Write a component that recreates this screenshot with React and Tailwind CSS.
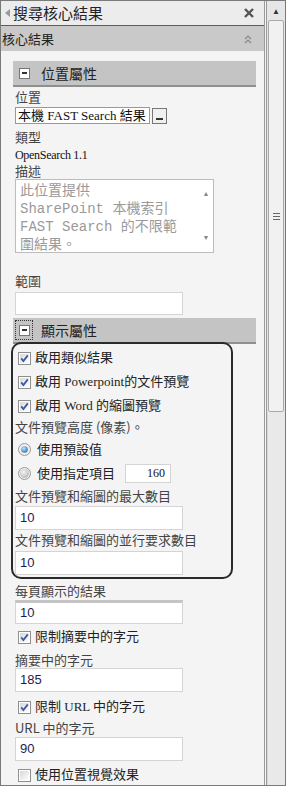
const cjk = "font-['Noto_Sans_CJK_TC','Liberation_Sans',sans-serif]";
const serif = "font-['Liberation_Serif','Noto_Sans_CJK_TC',serif]";

const Check = ({ checked = true }) => (
  <svg width="13" height="13" viewBox="0 0 13 13" className="shrink-0">
    <defs>
      <linearGradient id="cb" x1="0" y1="0" x2="1" y2="1">
        <stop offset="0" stopColor="#d8d8d8" />
        <stop offset="1" stopColor="#ffffff" />
      </linearGradient>
    </defs>
    <rect x="0.5" y="0.5" width="12" height="12" fill="#fff" stroke="#8e8f8f" />
    <rect x="2" y="2" width="9" height="9" fill="url(#cb)" />
    {checked && (
      <path d="M3.2 6.4 L5.4 9 L9.8 3.4" fill="none" stroke="#3a5aa8" strokeWidth="1.8" />
    )}
  </svg>
);

const Radio = ({ checked }) => (
  <svg width="13" height="13" viewBox="0 0 13 13" className="shrink-0">
    <defs>
      <radialGradient id={checked ? "rb1" : "rb0"} cx="0.4" cy="0.35" r="0.7">
        <stop offset="0" stopColor={checked ? "#bfe4fb" : "#f4f4f4"} />
        <stop offset="1" stopColor={checked ? "#2a6fb8" : "#b9b9b9"} />
      </radialGradient>
    </defs>
    <circle cx="6.5" cy="6.5" r="6" fill="#eee" stroke="#9a9a9a" />
    <circle cx="6.5" cy="6.5" r={checked ? 3.3 : 4.5} fill={`url(#${checked ? "rb1" : "rb0"})`} />
  </svg>
);

const CheckRow = ({ label, checked = true, className = "" }) => (
  <div className={`flex items-center gap-[4px] pl-[3px] h-[24px] shrink-0 ${className}`}>
    <Check checked={checked} />
    <span className={`text-[13px] text-[#222] ${serif}`}>{label}</span>
  </div>
);

const Label = ({ children, className = "" }) => (
  <div className={`text-[13px] leading-[16px] text-[#444] shrink-0 ${cjk} ${className}`}>{children}</div>
);

const Field = ({ value, strong = false }) => (
  <div
    className={`w-[168px] h-[24px] bg-white border border-[#d4d4d4] ${strong ? "border-t-[3px] border-t-[#c4c4c4]" : ""} flex items-center pl-[4px] text-[13px] text-[#1c1c55] font-['Liberation_Sans',sans-serif]`}
  >
    {value}
  </div>
);

const SectionHead = ({ title, focus = false }) => (
  <div className="-ml-[2px] w-[243px] h-[26px] shrink-0 bg-[#c4c4c4] border-b-2 border-b-[#8f8f8f] flex items-center">
    <div
      className={`ml-[2px] w-[18px] h-[20px] flex items-center justify-center ${focus ? "border border-dotted border-[#333]" : ""}`}
    >
      <div className="w-[11px] h-[11px] bg-white border border-[#777] flex items-center justify-center">
        <div className="w-[5px] h-[1.5px] bg-[#333]" />
      </div>
    </div>
    <span className={`ml-[8px] text-[14px] text-[#222] ${cjk}`}>{title}</span>
  </div>
);

export default function App() {
  return (
    <div className="w-[286px] h-[786px] flex overflow-hidden border border-[#7a7a7a] bg-[#f4f4f4]">
      <div className="flex-1 flex flex-col border-r-[3px] border-double border-r-[#9a9a9a]">
        <div className="h-[25px] shrink-0 bg-[#ececec] border-b border-b-[#5a5a5a] flex items-center pl-[4px] pr-[10px]">
          <svg width="5" height="8" viewBox="0 0 5 8" className="mr-[3px]">
            <path d="M5 0 L0 4 L5 8 Z" fill="#9a9a9a" />
          </svg>
          <span className={`text-[15px] text-[#222] ${cjk}`}>搜尋核心結果</span>
          <svg width="10" height="10" viewBox="0 0 10 10" className="ml-auto">
            <path d="M1 1 L9 9 M9 1 L1 9" stroke="#555" strokeWidth="2.4" />
          </svg>
        </div>
        <div className="h-[25px] shrink-0 bg-[#c9c9c9] flex items-center pl-[1px] pr-[11px]">
          <span className={`text-[13px] text-[#222] ${cjk}`}>核心結果</span>
          <svg width="10" height="10" viewBox="0 0 10 10" className="ml-auto">
            <path d="M2 5 L5 2 L8 5 M2 9 L5 6 L8 9" fill="none" stroke="#888" strokeWidth="1.2" />
          </svg>
        </div>

        <div className="pl-[14px] pt-[10px] flex flex-col">
          <SectionHead title="位置屬性" />
          <Label className="mt-[2px]">位置</Label>
          <div className="mt-[2px] flex items-center gap-[2px] shrink-0">
            <div className={`w-[135px] h-[17px] bg-white border border-[#999] flex items-center pl-[2px] text-[13px] text-[#111] ${serif}`}>
              本機 FAST Search 結果
            </div>
            <div className="w-[15px] h-[16px] bg-[#f0f0f0] border border-[#777] flex items-end justify-center pb-[3px]">
              <div className="w-[7px] h-[2px] bg-[#333]" />
            </div>
          </div>
          <Label className="mt-[5px]">類型</Label>
          <div className={`mt-[2px] text-[12px] leading-[16px] text-[#111] ${serif} tracking-[-0.3px]`}>OpenSearch 1.1</div>
          <Label className="mt-[0px]">描述</Label>
          <div className="w-[199px] h-[74px] shrink-0 bg-white border border-[#bcbcbc] flex overflow-hidden">
            <div className="flex-1 pl-[4px] pt-[2px] text-[14px] leading-[18px] text-[#9a9a9a] font-['Liberation_Mono','Noto_Sans_CJK_TC',monospace] whitespace-nowrap">
              <div>此位置提供</div>
              <div>SharePoint 本機索引</div>
              <div>FAST Search 的不限範</div>
              <div>圍結果。</div>
            </div>
            <div className="w-[14px] flex flex-col items-center justify-between py-[9px] text-[7px] text-[#888]">
              <span>▲</span>
              <span>▼</span>
            </div>
          </div>
          <Label className="mt-[20px]">範圍</Label>
          <div className="mt-[3px] w-[168px] h-[23px] shrink-0 bg-white border border-[#d4d4d4]" />
          <div className="mt-[3px]">
            <SectionHead title="顯示屬性" focus />
          </div>

          <div className="-ml-[4px] -mt-[2px] w-[222px] shrink-0 border-2 border-[#2a2a2a] rounded-[10px] pl-[2px] pt-[2px] pb-[2px] flex flex-col">
            <CheckRow label="啟用類似結果" />
            <CheckRow label="啟用 Powerpoint的文件預覽" />
            <CheckRow label="啟用 Word 的縮圖預覽" />
            <Label className="mt-[1px]">文件預覽高度 (像素)。</Label>
            <div className="mt-[2px] flex items-center gap-[6px] pl-[3px] h-[24px]">
              <Radio checked />
              <span className={`text-[13px] text-[#222] ${cjk}`}>使用預設值</span>
            </div>
            <div className="flex items-center gap-[6px] pl-[3px] h-[24px]">
              <Radio checked={false} />
              <span className={`text-[13px] text-[#222] ${cjk}`}>使用指定項目</span>
              <div className="ml-[4px] w-[46px] h-[19px] bg-white border border-[#d4d4d4] flex items-center justify-end pr-[5px] text-[12px] text-[#111] font-['Liberation_Serif',serif]">
                160
              </div>
            </div>
            <Label className="mt-[3px]">文件預覽和縮圖的最大數目</Label>
            <div className="mt-[2px]">
              <Field value="10" />
            </div>
            <Label className="mt-[2px]">文件預覽和縮圖的並行要求數目</Label>
            <div className="mt-[3px]">
              <Field value="10" />
            </div>
          </div>

          <Label className="mt-[4px]">每頁顯示的結果</Label>
          <div className="mt-[1px] shrink-0">
            <Field value="10" strong />
          </div>
          <CheckRow label="限制摘要中的字元" className="mt-[1px]" />
          <Label className="mt-[3px]">摘要中的字元</Label>
          <div className="shrink-0">
            <Field value="185" />
          </div>
          <CheckRow label="限制 URL 中的字元" className="mt-[3px]" />
          <Label className={`mt-[1px] ${serif}`}>URL 中的字元</Label>
          <div className="mt-[1px] shrink-0">
            <Field value="90" />
          </div>
          <CheckRow label="使用位置視覺效果" checked={false} className="mt-[2px]" />
        </div>
      </div>

      <div className="w-[18px] shrink-0 bg-[#e6e6e6] flex flex-col">
        <div className="h-[19px] shrink-0 flex items-center justify-center text-[8px] text-[#333]">▲</div>
        <div className="h-[392px] shrink-0 mx-[1px] bg-[#f1f1f1] border border-[#a9a9a9] rounded-[2px] flex items-center justify-center">
          <div className="flex flex-col gap-[2px]">
            <div className="w-[7px] h-[1px] bg-[#666]" />
            <div className="w-[7px] h-[1px] bg-[#666]" />
            <div className="w-[7px] h-[1px] bg-[#666]" />
          </div>
        </div>
        <div className="flex-1 bg-[#e9e9e9] border-l border-[#d8d8d8]" />
      </div>
    </div>
  );
}
